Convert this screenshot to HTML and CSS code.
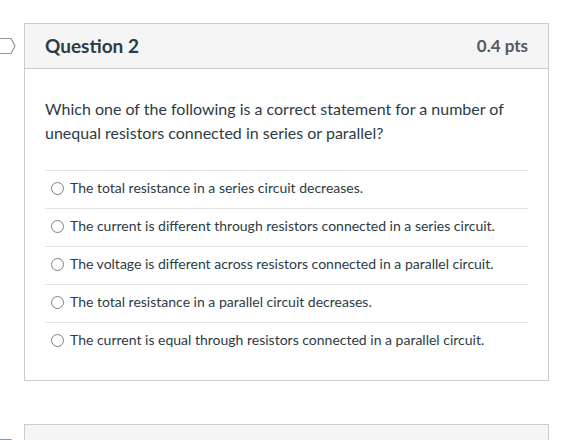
FILE: index.html
```html
<!DOCTYPE html>
<html>
<head>
<meta charset="utf-8">
<link rel="stylesheet" href="styles.css">
</head>
<body>
<div class="page">
  <div class="card">
    <svg class="flag" width="17" height="18" viewBox="0 0 17 18"><path d="M-2 1.5 H11 L15 9 L11 16.5 H-2" fill="none" stroke="#8b969e" stroke-width="1.2" stroke-linejoin="round"/></svg>
    <div class="card-header">
      <span class="q-title">Question 2</span>
      <span class="q-pts">0.4 pts</span>
    </div>
    <div class="card-body">
      <p class="q-text">Which one of the following is a correct statement for a number of unequal resistors connected in series or parallel?</p>
      <div class="answers">
        <label class="answer"><span class="radio"></span><span>The total resistance in a series circuit decreases.</span></label>
        <label class="answer"><span class="radio"></span><span>The current is different through resistors connected in a series circuit.</span></label>
        <label class="answer"><span class="radio"></span><span>The voltage is different across resistors connected in a parallel circuit.</span></label>
        <label class="answer"><span class="radio"></span><span>The total resistance in a parallel circuit decreases.</span></label>
        <label class="answer"><span class="radio"></span><span>The current is equal through resistors connected in a parallel circuit.</span></label>
      </div>
    </div>
  </div>
  <div class="card">
    <svg class="flag" width="17" height="18" viewBox="0 0 17 18"><path d="M-2 1.5 H11 L15 9 L11 16.5 H-2" fill="none" stroke="#8b969e" stroke-width="1.2" stroke-linejoin="round"/></svg>
    <div class="card-header">
      <span class="q-title">Question 3</span>
      <span class="q-pts">0.4 pts</span>
    </div>
  </div>
</div>
</body>
</html>
```

FILE: styles.css
```css
html, body {
  margin: 0;
  padding: 0;
  background: #ffffff;
  overflow: hidden;
}
body {
  font-family: Lato, "Liberation Sans", sans-serif;
  color: #2d3b45;
}
.page {
  padding: 23px 0 0 24px;
  width: 525px;
  display: flex;
  flex-direction: column;
  gap: 43px;
}
.card {
  position: relative;
  border: 1px solid #c7cdd1;
  background: #fff;
}
.flag {
  position: absolute;
  left: -25px;
  top: 13px;
}
.card-header {
  height: 44px;
  box-sizing: border-box;
  padding: 0 20px 2px;
  background: #f5f5f5;
  border-bottom: 1px solid #c7cdd1;
  display: flex;
  justify-content: space-between;
  align-items: center;
}
.card-header {
  height: 45px;
}
.q-title {
  font-size: 19px;
  font-weight: 700;
  color: #2d3b45;
}
.q-pts {
  font-size: 17px;
  font-weight: 700;
  color: #555a5e;
}
.card-body {
  padding: 28px 20px 20px;
}
.q-text {
  margin: 0 0 25px;
  font-size: 16px;
  line-height: 24px;
}
.answers {
  display: flex;
  flex-direction: column;
}
.answer {
  display: flex;
  align-items: center;
  gap: 6px;
  height: 37px;
  box-sizing: content-box;
  border-top: 1px solid #e3e5e7;
  padding-left: 6px;
  font-size: 14px;
}
.answer > span:last-child {
  padding-bottom: 4px;
}
.radio {
  width: 11px;
  height: 11px;
  margin-bottom: 2px;
  border: 1px solid #7a8187;
  border-radius: 50%;
  flex: none;
}
```
